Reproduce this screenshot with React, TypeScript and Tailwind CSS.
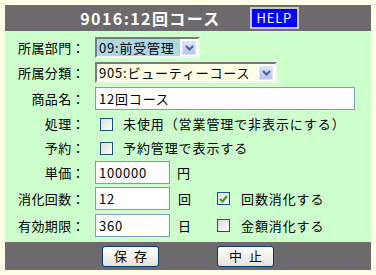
const font = "font-['Noto_Sans_CJK_JP',sans-serif]"

function Arrow() {
  return (
    <span className="flex h-[14px] w-[14px] items-center justify-center border border-[#dbe4fb] bg-gradient-to-b from-[#d7e1fb] to-[#b4c6f2]">
      <svg width="9" height="6" viewBox="0 0 9 6">
        <path d="M1 1 L4.5 4.5 L8 1" fill="none" stroke="#4d6185" strokeWidth="2" />
      </svg>
    </span>
  )
}

function Select({ text, width, bg }: { text: string; width: string; bg: string }) {
  return (
    <div
      className={`flex h-[21px] items-center border-2 border-t-[#7a7a7a] border-l-[#7a7a7a] border-r-[#f4f4f4] border-b-[#f4f4f4] bg-white ${width}`}
    >
      <div className={`flex h-full flex-1 items-center pl-[2px] tracking-[0.8px] ${bg}`}>{text}</div>
      <div className="flex h-full items-center px-[2px]">
        <Arrow />
      </div>
    </div>
  )
}

function Check({ checked }: { checked?: boolean }) {
  return (
    <span className="flex h-[13px] w-[13px] items-center justify-center border border-[#1c5180] bg-gradient-to-br from-[#dcdcd7] to-white">
      {checked && (
        <svg width="9" height="8" viewBox="0 0 9 8">
          <path d="M1 4 L3.5 6.5 L8 1" fill="none" stroke="#21a121" strokeWidth="2" />
        </svg>
      )}
    </span>
  )
}

function TextBox({ value, width }: { value: string; width: string }) {
  return (
    <div className={`flex h-[23px] items-center border border-[#7f9db9] bg-white pl-[3px] tracking-[0.8px] ${width}`}>
      {value}
    </div>
  )
}

function Row({ label, h, children }: { label: string; h: string; children: React.ReactNode }) {
  return (
    <div className={`flex items-center ${h}`}>
      <div className="w-[80px] text-right tracking-[0.4px]">{label}</div>
      <div className="ml-[10px] flex items-center">{children}</div>
    </div>
  )
}

function XpButton({ label }: { label: string }) {
  return (
    <button
      type="button"
      className="flex h-[21px] w-[57px] items-center justify-center rounded-[3px] border border-[#003c74] bg-gradient-to-b from-white to-[#e3e3db] pl-[7px] text-[13px] tracking-[7px] text-black"
    >
      {label}
    </button>
  )
}

export default function App() {
  return (
    <div className={`h-[275px] w-[376px] bg-[#ffffe8] p-[5px] text-[13px] text-black ${font}`}>
      <div className="w-[366px]">
        <header className="flex h-[26px] items-center justify-center gap-[29px] bg-[#6c6a6d] pl-[3px]">
          <span className="text-[16px] font-bold tracking-[1.4px] text-white">9016:12回コース</span>
          <span className="flex h-[22px] w-[49px] items-center justify-center border-2 border-[#c8c6c0] bg-[#0000ff] text-[13px] tracking-[0.8px] text-white">
            HELP
          </span>
        </header>
        <main className="flex flex-col bg-[#ccffcc] pt-[4px] pb-[3px]">
          <Row label="所属部門：" h="h-[25px]">
            <Select text="09:前受管理" width="w-[105px]" bg="bg-[#add8e6]" />
          </Row>
          <Row label="所属分類：" h="h-[25px]">
            <Select text="905:ビューティーコース" width="w-[182px]" bg="bg-[#ffffe6]" />
          </Row>
          <Row label="商品名：" h="h-[27px]">
            <TextBox value="12回コース" width="w-[260px]" />
          </Row>
          <Row label="処理：" h="h-[24px]">
            <span className="ml-[5px]">
              <Check />
            </span>
            <span className="ml-[10px] tracking-[0.9px]">未使用（営業管理で非表示にする）</span>
          </Row>
          <Row label="予約：" h="h-[24px]">
            <span className="ml-[5px]">
              <Check />
            </span>
            <span className="ml-[10px] tracking-[0.9px]">予約管理で表示する</span>
          </Row>
          <Row label="単価：" h="h-[25px]">
            <TextBox value="100000" width="w-[75px]" />
            <span className="ml-[7px]">円</span>
          </Row>
          <Row label="消化回数：" h="h-[27px]">
            <TextBox value="12" width="w-[75px]" />
            <span className="ml-[8px] w-[39px]">回</span>
            <Check checked />
            <span className="ml-[11px] tracking-[0.9px]">回数消化する</span>
          </Row>
          <Row label="有効期限：" h="h-[27px]">
            <TextBox value="360" width="w-[75px]" />
            <span className="ml-[8px] w-[39px]">日</span>
            <Check />
            <span className="ml-[11px] tracking-[0.9px]">金額消化する</span>
          </Row>
        </main>
        <footer className="flex h-[28px] items-center justify-center gap-[58px] bg-[#6c6a6d]">
          <XpButton label="保存" />
          <XpButton label="中止" />
        </footer>
      </div>
    </div>
  )
}
